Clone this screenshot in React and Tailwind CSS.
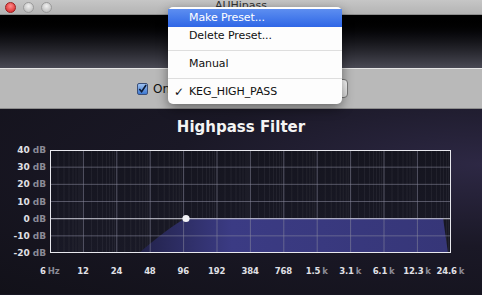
import React from 'react';

const yLabels = ['40', '30', '20', '10', '0', '-10', '-20'];
const xLabels = [
    ['6', 'Hz'], ['12', ''], ['24', ''], ['48', ''], ['96', ''], ['192', ''], ['384', ''],
    ['768', ''], ['1.5', 'k'], ['3.1', 'k'], ['6.1', 'k'], ['12.3', 'k'], ['24.6', 'k'],
];

const Graph = () => {
    // 401 x 103 plot area, 12 columns, 6 rows
    const cols = Array.from({ length: 13 }, (_, i) => i * 33.4);
    const rows = Array.from({ length: 7 }, (_, i) => i * 17.17);
    const minor = [];
    cols.slice(0, 12).forEach((x) => {
        [8, 14, 19, 23, 26, 29, 31].forEach((d) => minor.push(x + d));
    });
    return (
        <svg width="401" height="103" viewBox="0 0 401 103" className="block">
            <defs>
                <linearGradient id="fill" x1="0" x2="1" y1="0" y2="0">
                    <stop offset="0" stopColor="#22224a" />
                    <stop offset="0.3" stopColor="#3b3b84" />
                    <stop offset="1" stopColor="#363678" />
                </linearGradient>
                <linearGradient id="bg" x1="0" x2="0" y1="0" y2="1">
                    <stop offset="0" stopColor="#15151f" />
                    <stop offset="1" stopColor="#191926" />
                </linearGradient>
            </defs>
            <rect width="401" height="103" fill="url(#bg)" />
            {minor.map((x, i) => (
                <line key={'m' + i} x1={x} x2={x} y1="0" y2="103" stroke="#ffffff" strokeOpacity="0.06" />
            ))}
            <path d="M 89 103 Q 118 78 136 68 L 393 68 L 398 103 Z" fill="url(#fill)" />
            {cols.map((x, i) => (
                <line key={'c' + i} x1={x} x2={x} y1="0" y2="103" stroke="#8a8a9e" strokeOpacity="0.55" />
            ))}
            {rows.map((y, i) => (
                <line key={'r' + i} x1="0" x2="401" y1={y} y2={y} stroke="#8a8a9e" strokeOpacity="0.55" />
            ))}
            <line x1="0" x2="401" y1="68.7" y2="68.7" stroke="#d8d8e0" strokeOpacity="0.8" />
            <rect x="0.5" y="0.5" width="400" height="102" fill="none" stroke="#e8e8ee" />
            <circle cx="136" cy="68.5" r="3.6" fill="#f2f2f6" />
        </svg>
    );
};

const MenuItem = ({ label, active, checked }) => (
    <div
        className={`h-[18px] flex items-center pl-[21px] relative ${
            active ? 'bg-gradient-to-b from-[#5d8ef0] to-[#2f66e6] text-white' : 'text-[#111]'
        }`}
    >
        {checked && <span className="absolute left-[6px] text-[12px]">✓</span>}
        {label}
    </div>
);

export default function App() {
    return (
        <div className="w-[482px] h-[295px] relative overflow-hidden font-['DejaVu_Sans','Liberation_Sans',sans-serif] bg-[#171622]">
            {/* Title bar */}
            <div className="h-[15px] bg-gradient-to-b from-[#c6c6c6] to-[#b4b4b4] flex items-center relative border-b border-[#8e8e8e]">
                <div className="flex gap-[7px] pl-[5px]">
                    <div className="w-[11px] h-[11px] rounded-full bg-[radial-gradient(circle_at_50%_35%,#ff8a8a,#d41c1c)] border border-[#9a2020]" />
                    <div className="w-[11px] h-[11px] rounded-full bg-[radial-gradient(circle_at_50%_35%,#f0f0f0,#b0b0b0)] border border-[#9a9a9a]" />
                    <div className="w-[11px] h-[11px] rounded-full bg-[radial-gradient(circle_at_50%_35%,#f0f0f0,#b0b0b0)] border border-[#9a9a9a]" />
                </div>
                <div className="absolute left-0 right-0 top-[-1px] text-center text-[11px] leading-[14px] text-[#333]">AUHipass</div>
            </div>

            {/* Dark band */}
            <div className="h-[53px] bg-gradient-to-b from-[#000000] via-[#15151a] to-[#4a4a55]" />
            <div className="h-[1px] bg-[#e6e6e6]" />

            {/* Toolbar */}
            <div className="h-[40px] bg-[#b9b9b9] flex items-center pl-[137px] gap-[5px] border-b border-[#8c8c8c]">
                <div className="w-[11px] h-[12px] rounded-[2px] border border-[#3a4f7a] bg-gradient-to-b from-[#9cc0f0] to-[#3d78d0] flex items-center justify-center">
                    <svg width="10" height="10" viewBox="0 0 10 10">
                        <path d="M1.5 5 L4 8 L9 0.5" fill="none" stroke="#0d1a33" strokeWidth="1.8" />
                    </svg>
                </div>
                <span className="text-[12px] text-[#111]">On</span>
                <div className="ml-[10px] w-[163px] h-[19px] rounded-[4px] border border-[#7a7a7a] bg-gradient-to-b from-[#ffffff] to-[#dcdcdc]" />
            </div>

            {/* Plugin panel */}
            <div className="h-[185px] bg-[radial-gradient(ellipse_at_100%_30%,#2d2844_0%,#1a1826_45%,#121119_100%)] flex flex-col items-center">
                <div className="pt-[7px] h-[41px] text-[15px] font-bold text-[#f4f4f4]">Highpass Filter</div>
                <div className="flex w-full">
                    <div className="w-[50px] flex flex-col items-end pr-[4px] -mt-[8px]">
                        {yLabels.map((l) => (
                            <div key={l} className="h-[17.17px] flex items-center text-[9px] font-bold leading-none">
                                <span className="text-[#e0e0e6]">{l}</span>
                                <span className="text-[#8a8a96] ml-[3px]">dB</span>
                            </div>
                        ))}
                    </div>
                    <Graph />
                </div>
                <div className="flex w-full pl-[33px] pt-[3px]">
                    {xLabels.map(([n, u]) => (
                        <div key={n} className="w-[33.4px] flex justify-center text-[8.5px] font-bold whitespace-nowrap tracking-[-0.2px]">
                            <span className="text-[#e0e0e6]">{n}</span>
                            {u && <span className="text-[#8a8a96] ml-[2px]">{u}</span>}
                        </div>
                    ))}
                </div>
            </div>

            {/* Preset menu */}
            <div className="absolute left-[168px] top-[7px] w-[174px] bg-[#fdfdfd] rounded-[5px] shadow-[0_4px_12px_rgba(0,0,0,0.45)] pt-[2px] pb-[3px] text-[11px] tracking-[-0.1px]">
                <MenuItem label="Make Preset..." active />
                <MenuItem label="Delete Preset..." />
                <div className="h-[10px] flex items-center"><div className="h-[1px] w-full bg-[#dedede]" /></div>
                <MenuItem label="Manual" />
                <div className="h-[10px] flex items-center"><div className="h-[1px] w-full bg-[#dedede]" /></div>
                <MenuItem label="KEG_HIGH_PASS" checked />
            </div>
        </div>
    );
}
